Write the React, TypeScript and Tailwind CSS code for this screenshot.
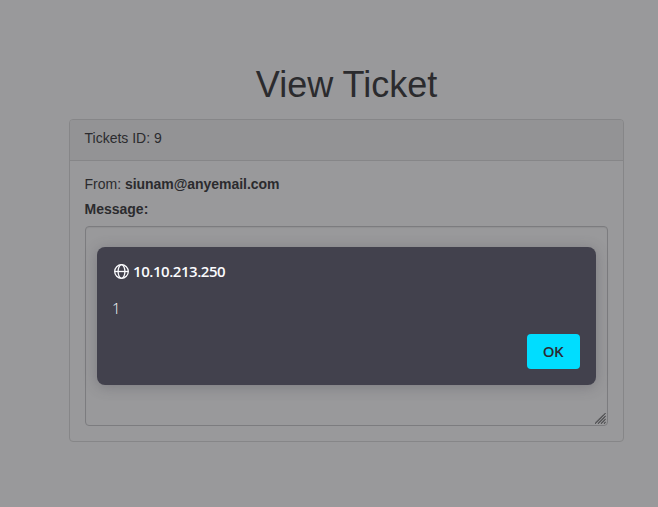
export default function App() {
  return (
    <div className="h-[507px] w-[658px] overflow-hidden bg-[#99999b] pl-[69px] pt-[65px] font-['Liberation_Sans',Arial,sans-serif] text-[14px] leading-5 text-[#2b2b2e]">
      <main className="w-[555px]">
        <h1 className="mb-[14px] text-center text-[36px] leading-10 text-[#2b2b2e]">View Ticket</h1>
        <section className="h-[323px] rounded-[4px] border border-[#868688] bg-[#99999b]">
          <header className="h-[41px] rounded-t-[3px] border-b border-[#868688] bg-[#939395] pl-[14.5px] pt-[8px]">
            Tickets ID: 9
          </header>
          <div className="px-[15px] pt-[13px]">
            <p className="-ml-[0.5px]">
              From: <strong className="tracking-[-0.04px]">siunam@anyemail.com</strong>
            </p>
            <p className="-ml-[0.5px] mt-[5px] font-bold">Message:</p>
            <div className="relative mt-[7px] h-[200px] rounded-[4px] border border-[#7c7c7f] px-[11px] pt-[20px] shadow-[inset_0_1px_1px_rgba(0,0,0,0.06)]">
              <div
                role="alertdialog"
                className="flex h-[138px] w-[499px] flex-col rounded-[8px] bg-[#42414d] px-4 pb-4 pt-[13px] font-['Open_Sans','Noto_Sans',sans-serif] text-[#fbfbfe] shadow-[0_2px_14px_rgba(58,57,68,0.3)]"
              >
                <div className="flex h-[22px] items-center gap-[4px] text-[15px] font-semibold">
                  <svg className="ml-[1px] mt-[2px] shrink-0" width="15" height="16" viewBox="0 0 15 16" fill="none" stroke="currentColor" strokeWidth="1.3">
                    <circle cx="7.5" cy="7.5" r="6.8" />
                    <ellipse cx="7.5" cy="7.5" rx="3.4" ry="6.8" />
                    <path d="M.6 7.5h13.8" />
                  </svg>
                  <span className="tracking-[-0.45px]">10.10.213.250</span>
                </div>
                <p className="-ml-[1px] mt-[15px] text-[15px] font-light leading-[22px]">1</p>
                <button className="ml-auto mt-auto h-[35px] w-[53px] rounded-[4px] bg-[#00ddff] pb-[2px] pr-[1px] text-[15px] font-semibold tracking-[-0.4px] text-[#2b2a33]">
                  OK
                </button>
              </div>
              <svg className="absolute bottom-[1px] right-[1px]" width="11" height="11" viewBox="0 0 11 11" fill="none" stroke="#404043" strokeWidth="1.2" strokeDasharray="1.1 .3">
                <path d="M0 10.5 10.5 0M3 10.5 10.5 3M6 10.5 10.5 6M9 10.5 10.5 9" />
              </svg>
            </div>
          </div>
        </section>
      </main>
    </div>
  );
}
